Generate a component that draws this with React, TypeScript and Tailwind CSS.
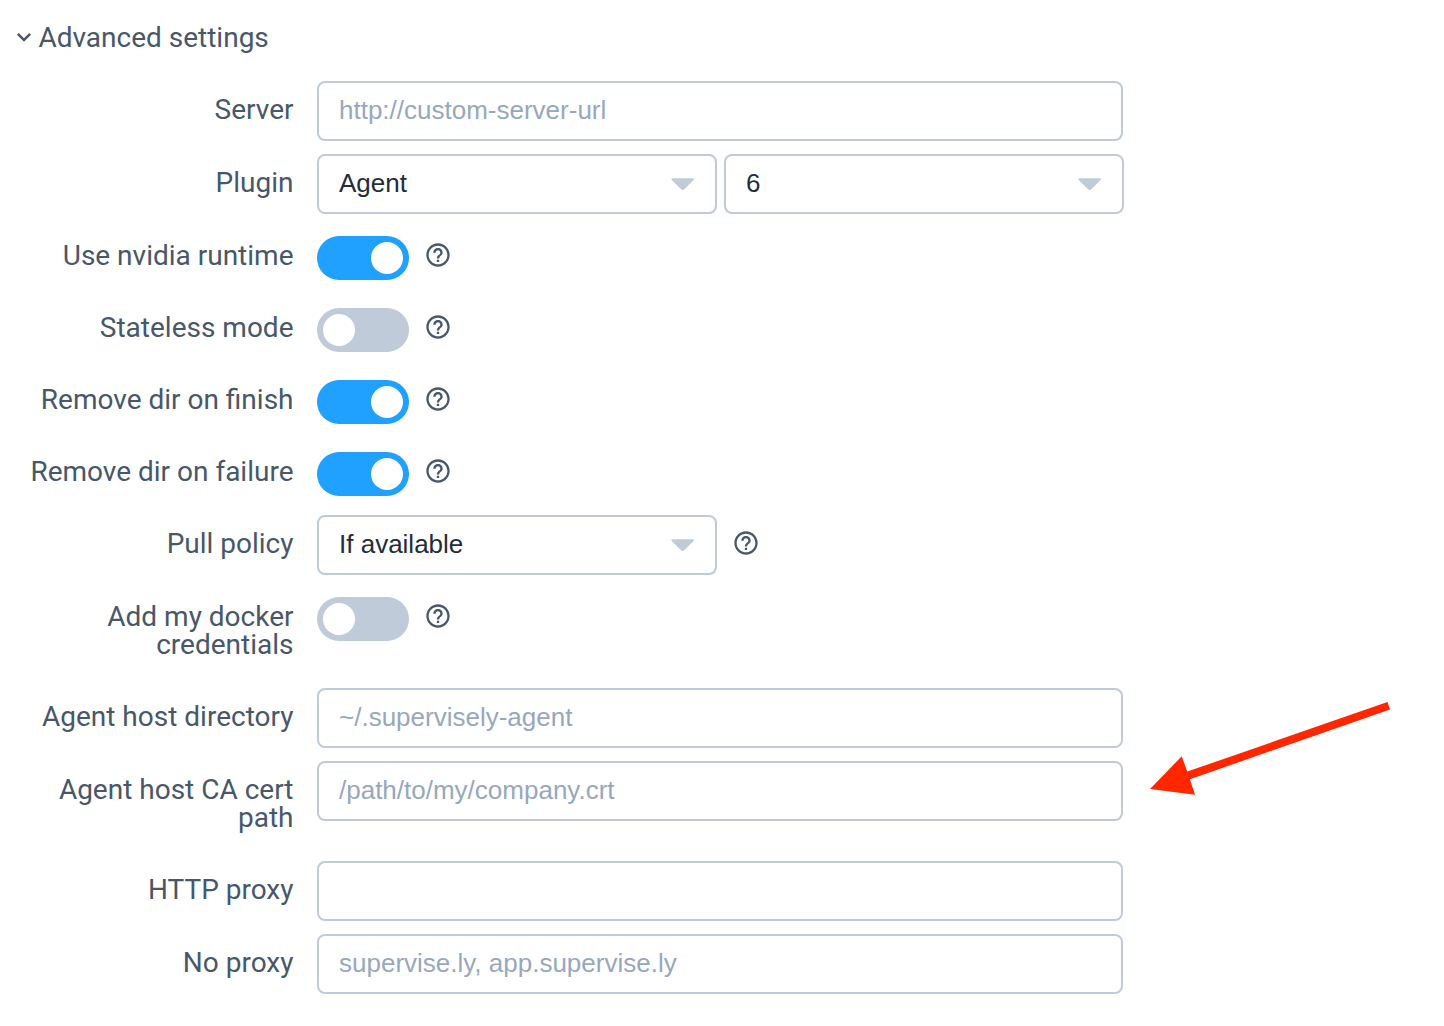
import type { ReactNode } from "react";

function HelpIcon() {
  return (
    <svg viewBox="0 0 24 24" className="size-7 shrink-0 fill-[#48576a]" aria-label="Help">
      <path d="M11 18h2v-2h-2v2zm1-16C6.48 2 2 6.48 2 12s4.48 10 10 10 10-4.48 10-10S17.52 2 12 2zm0 18c-4.41 0-8-3.59-8-8s3.59-8 8-8 8 3.59 8 8-3.59 8-8 8zm0-14c-2.21 0-4 1.79-4 4h2c0-1.1.9-2 2-2s2 .9 2 2c0 2-3 1.75-3 5h2c0-2.25 3-2.5 3-5 0-2.21-1.79-4-4-4z" />
    </svg>
  );
}

function Row({ label, height, children }: { label: string; height: string; children: ReactNode }) {
  return (
    <div className={`flex items-start ${height}`}>
      <label className="w-[293.5px] shrink-0 pt-[14.5px] pl-5 text-right text-[28px] leading-7 text-[#48576a]">
        {label}
      </label>
      <div className="ml-[23.5px] flex items-start">{children}</div>
    </div>
  );
}

function TextInput({ placeholder }: { placeholder?: string }) {
  return (
    <input
      type="text"
      placeholder={placeholder}
      className="h-15 w-[806px] rounded-lg border-2 border-[#bfcbd9] bg-white px-5 pb-0.5 font-['Liberation_Sans',Arial,sans-serif] text-[26px] text-[#1f2d3d] outline-none placeholder:text-[#97a8be]"
    />
  );
}

function Select({ value }: { value: string }) {
  return (
    <div className="flex h-15 w-[400px] items-center justify-between rounded-lg border-2 border-[#bfcbd9] bg-white px-5 font-['Liberation_Sans',Arial,sans-serif] text-[26px] leading-none text-[#1f2d3d]">
      <span className="pb-0.5">{value}</span>
      <svg viewBox="0 0 24 14" className="h-3.5 w-6 fill-[#bfcbd9]">
        <path d="M1.5 1.2h20.4c1 0 1.4 1.2.7 1.9l-9.3 9.2c-.9.9-2.3.9-3.2 0L.8 3.1C.1 2.4.5 1.2 1.5 1.2z" />
      </svg>
    </div>
  );
}

function Switch({ on = false }: { on?: boolean }) {
  return (
    <div className="flex items-start gap-[15px] pt-[9px]">
      <button
        type="button"
        role="switch"
        aria-checked={on}
        className={`flex h-11 w-[92px] items-center rounded-full px-1.5 ${on ? "justify-end bg-[#20a0ff]" : "justify-start bg-[#bfcbd9]"}`}
      >
        <span className="size-8 rounded-full bg-white" />
      </button>
      <div className="pt-[4.5px]">
        <HelpIcon />
      </div>
    </div>
  );
}

export default function App() {
  return (
    <main className="relative h-[1026px] w-[1444px] overflow-hidden bg-white font-[Roboto,sans-serif]">
      <h1 className="flex h-[81px] items-start pt-[22.5px] pl-[10.4px] text-[28px] leading-7 font-normal text-[#48576a]">
        <svg viewBox="0 0 24 24" className="size-7 shrink-0 fill-current">
          <path d="M7.41 8.58 12 13.17l4.59-4.59L18 10l-6 6-6-6z" />
        </svg>
        <span className="pt-[1.5px]">Advanced settings</span>
      </h1>

      <form>
        <Row label="Server" height="h-[73px]">
          <TextInput placeholder="http://custom-server-url" />
        </Row>
        <Row label="Plugin" height="h-[73px]">
          <div className="flex gap-[7px]">
            <Select value="Agent" />
            <Select value="6" />
          </div>
        </Row>
        <Row label="Use nvidia runtime" height="h-[72px]">
          <Switch on />
        </Row>
        <Row label="Stateless mode" height="h-[72px]">
          <Switch />
        </Row>
        <Row label="Remove dir on finish" height="h-[72px]">
          <Switch on />
        </Row>
        <Row label="Remove dir on failure" height="h-[72px]">
          <Switch on />
        </Row>
        <Row label="Pull policy" height="h-[73px]">
          <Select value="If available" />
          <div className="pt-[13.5px] pl-[15px]">
            <HelpIcon />
          </div>
        </Row>
        <Row label="Add my docker credentials" height="h-[100px]">
          <Switch />
        </Row>
        <Row label="Agent host directory" height="h-[73px]">
          <TextInput placeholder="~/.supervisely-agent" />
        </Row>
        <Row label="Agent host CA cert path" height="h-[100px]">
          <TextInput placeholder="/path/to/my/company.crt" />
        </Row>
        <Row label="HTTP proxy" height="h-[73px]">
          <TextInput />
        </Row>
        <Row label="No proxy" height="h-[73px]">
          <TextInput placeholder="supervise.ly, app.supervise.ly" />
        </Row>
      </form>

      <svg
        viewBox="0 0 240 94"
        className="pointer-events-none absolute top-[702px] left-[1150px] h-[94px] w-[240px] fill-[#ff2600]"
      >
        <path d="M0 87 31.7 54.3 37.3 69.6 237.5 0 240 7.5 39.9 77.2 45 92.8z" />
      </svg>
    </main>
  );
}
